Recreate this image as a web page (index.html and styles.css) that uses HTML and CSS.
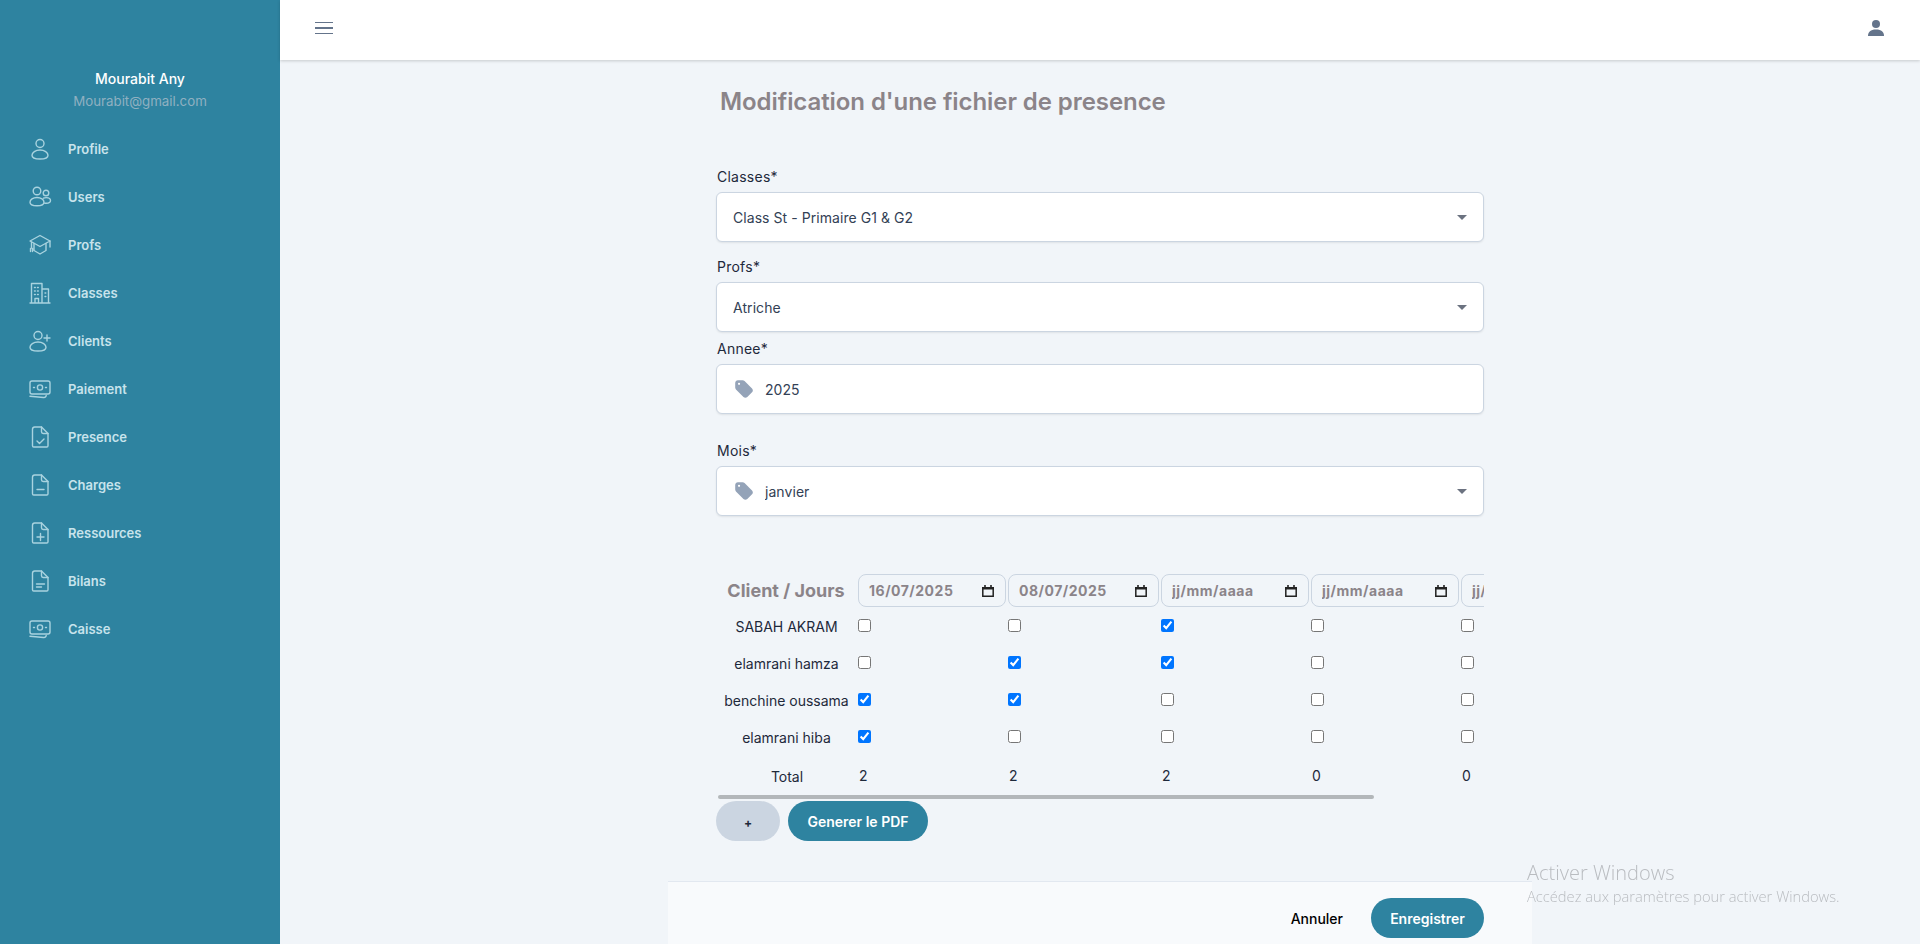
FILE: index.html

```html
<!DOCTYPE html>
<html lang="fr">
<head>
    <meta charset="UTF-8">
    <meta name="viewport" content="width=device-width, initial-scale=1.0">
    <title>Modification fichier de presence</title>
    <link rel="stylesheet" href="styles.css">
</head>
<body>
    <svg class="sprites" width="0" height="0">
        <symbol id="i-money" viewBox="0 0 24 24">
            <rect x="2" y="4" width="20" height="13" rx="2"/>
            <circle cx="12" cy="10.500" r="2.600"/>
            <path d="M5.500 10.500h1M17.500 10.500h1M2 19.200l13.500 1.300c1.400.1 2.500-.5 2.700-2"/>
        </symbol>
        <symbol id="i-doc" viewBox="0 0 24 24">
            <path d="M4.500 4.200C4.500 3 5.500 2 6.700 2h6.800L20 8.500v12.300c0 .7-.5 1.200-1.200 1.200H5.700c-.7 0-1.200-.5-1.200-1.200z"/>
            <path d="M13.500 2v4.800c0 1 .7 1.700 1.700 1.700H20"/>
        </symbol>
        <symbol id="i-tag" viewBox="0 0 20 20">
            <path d="M2 4.500C2 3.100 3.100 2 4.500 2h4.200c.7 0 1.300.3 1.800.7l6.800 6.800c1 1 1 2.500 0 3.500l-4.300 4.300c-1 1-2.500 1-3.500 0L2.700 10.500C2.300 10 2 9.400 2 8.700zM5.500 6.300a1 1 0 1 0 0-2 1 1 0 0 0 0 2z" fill-rule="evenodd"/>
        </symbol>
        <symbol id="i-cal" viewBox="0 0 12 12">
            <path d="M.8 2.800h10.400v8.400H.8z" fill="none" stroke="#222" stroke-width="1.500"/>
            <path d="M0 2h12v2.500H0zM2.200 0h1.600v2H2.200zM8.200 0h1.600v2H8.200z" fill="#222"/>
        </symbol>
    </svg>

    <div class="app">
        <aside class="sidebar">
            <div class="user-box">
                <div class="user-name">Mourabit Any</div>
                <div class="user-mail">Mourabit@gmail.com</div>
            </div>
            <nav class="menu">
                <a class="menu-item" href="#">
                    <svg class="menu-icon" viewBox="0 0 24 24"><circle cx="12" cy="6.500" r="4"/><path d="M12 13c-4.500 0-8 2.400-8 5.200 0 2.400 3.500 3.800 8 3.800s8-1.400 8-3.800C20 15.400 16.500 13 12 13z"/></svg>
                    Profile
                </a>
                <a class="menu-item" href="#">
                    <svg class="menu-icon" viewBox="0 0 24 24"><circle cx="9" cy="6" r="3.800"/><circle cx="18" cy="8" r="2.800"/><path d="M9 12.500c-4 0-7 2.200-7 4.800 0 2.200 3 3.500 7 3.500s7-1.300 7-3.500c0-2.600-3-4.800-7-4.800z"/><path d="M15.500 13.200c.8-.4 1.700-.6 2.700-.6 2.400 0 4.300 1.300 4.300 3s-1.900 2.700-4.300 2.700c-.7 0-1.300-.1-1.800-.2"/></svg>
                    Users
                </a>
                <a class="menu-item" href="#">
                    <svg class="menu-icon" viewBox="0 0 24 24"><path d="M12 2.500L2 8l10 5.500L22 8z"/><path d="M6 10.500v7l6 3.500 6-3.500v-7M22 8v6M3.500 9v6M2.500 15.500v3M4.500 15.500v3"/></svg>
                    Profs
                </a>
                <a class="menu-item" href="#">
                    <svg class="menu-icon" viewBox="0 0 24 24"><path d="M2 22h20M3.500 22V2.500h10.500V22M14 8h6.500v14M7 22v-4.500h3.500V22"/><path d="M6.500 6.500h.8M9.500 6.500h.8M6.500 10h.8M9.500 10h.8M6.500 13.500h.8M9.500 13.500h.8M17 12h.8M17 15.500h.8"/></svg>
                    Classes
                </a>
                <a class="menu-item" href="#">
                    <svg class="menu-icon" viewBox="0 0 24 24"><circle cx="10" cy="6.500" r="4"/><path d="M10 13c-4.500 0-8 2.400-8 5.200 0 2.400 3.500 3.800 8 3.800s8-1.400 8-3.800C18 15.400 14.500 13 10 13z"/><path d="M19 6v6M16 9h6"/></svg>
                    Clients
                </a>
                <a class="menu-item" href="#">
                    <svg class="menu-icon"><use href="#i-money"/></svg>
                    Paiement
                </a>
                <a class="menu-item" href="#">
                    <svg class="menu-icon"><use href="#i-doc"/><path d="M9 16l2.500 2.500 4.500-4.500"/></svg>
                    Presence
                </a>
                <a class="menu-item" href="#">
                    <svg class="menu-icon"><use href="#i-doc"/><path d="M9 16.500h7"/></svg>
                    Charges
                </a>
                <a class="menu-item" href="#">
                    <svg class="menu-icon"><use href="#i-doc"/><path d="M9 16h7M12.500 12.500v7"/></svg>
                    Ressources
                </a>
                <a class="menu-item" href="#">
                    <svg class="menu-icon"><use href="#i-doc"/><path d="M8.500 15h8M8.500 18h5"/></svg>
                    Bilans
                </a>
                <a class="menu-item" href="#">
                    <svg class="menu-icon"><use href="#i-money"/></svg>
                    Caisse
                </a>
            </nav>
        </aside>

        <div class="main">
            <header class="topbar">
                <div class="burger"><span></span><span></span><span></span></div>
                <svg class="top-user" viewBox="0 0 16 16"><circle cx="8" cy="4" r="4"/><path d="M0 16c0-4 2.500-6.500 8-6.500s8 2.500 8 6.500z"/></svg>
            </header>

            <main class="content">
                <h1 class="title">Modification d'une fichier de presence</h1>

                <form class="form">
                    <div class="group group-classes">
                        <label for="classe">Classes*</label>
                        <div class="field">
                            <select id="classe"><option>Class St - Primaire G1 &amp; G2</option></select>
                            <span class="caret"></span>
                        </div>
                    </div>
                    <div class="group group-profs">
                        <label for="prof">Profs*</label>
                        <div class="field">
                            <select id="prof"><option>Atriche</option></select>
                            <span class="caret"></span>
                        </div>
                    </div>
                    <div class="group group-annee">
                        <label for="annee">Annee*</label>
                        <div class="field">
                            <svg class="tag"><use href="#i-tag"/></svg>
                            <input id="annee" type="text" value="2025">
                        </div>
                    </div>
                    <div class="group group-mois">
                        <label for="mois">Mois*</label>
                        <div class="field">
                            <svg class="tag"><use href="#i-tag"/></svg>
                            <select id="mois"><option>janvier</option></select>
                            <span class="caret"></span>
                        </div>
                    </div>

                    <div class="table-scroll">
                        <table class="presence">
                            <thead>
                                <tr>
                                    <th class="name-col">Client / Jours</th>
                                    <th class="day"><div class="date"><input type="text" value="16/07/2025"><svg class="cal"><use href="#i-cal"/></svg></div></th>
                                    <th class="day wide"><div class="date"><input type="text" value="08/07/2025"><svg class="cal"><use href="#i-cal"/></svg></div></th>
                                    <th class="day"><div class="date"><input type="text" value="jj/mm/aaaa"><svg class="cal"><use href="#i-cal"/></svg></div></th>
                                    <th class="day"><div class="date"><input type="text" value="jj/mm/aaaa"><svg class="cal"><use href="#i-cal"/></svg></div></th>
                                    <th class="day"><div class="date"><input type="text" value="jj/mm/aaaa"><svg class="cal"><use href="#i-cal"/></svg></div></th>
                                </tr>
                            </thead>
                            <tbody>
                                <tr>
                                    <td class="name-col">SABAH AKRAM</td>
                                    <td><input type="checkbox"></td>
                                    <td><input type="checkbox"></td>
                                    <td><input type="checkbox" checked></td>
                                    <td><input type="checkbox"></td>
                                    <td><input type="checkbox"></td>
                                </tr>
                                <tr>
                                    <td class="name-col">elamrani hamza</td>
                                    <td><input type="checkbox"></td>
                                    <td><input type="checkbox" checked></td>
                                    <td><input type="checkbox" checked></td>
                                    <td><input type="checkbox"></td>
                                    <td><input type="checkbox"></td>
                                </tr>
                                <tr>
                                    <td class="name-col">benchine oussama</td>
                                    <td><input type="checkbox" checked></td>
                                    <td><input type="checkbox" checked></td>
                                    <td><input type="checkbox"></td>
                                    <td><input type="checkbox"></td>
                                    <td><input type="checkbox"></td>
                                </tr>
                                <tr>
                                    <td class="name-col">elamrani hiba</td>
                                    <td><input type="checkbox" checked></td>
                                    <td><input type="checkbox"></td>
                                    <td><input type="checkbox"></td>
                                    <td><input type="checkbox"></td>
                                    <td><input type="checkbox"></td>
                                </tr>
                                <tr class="total">
                                    <td class="name-col">Total</td>
                                    <td>2</td>
                                    <td>2</td>
                                    <td>2</td>
                                    <td>0</td>
                                    <td>0</td>
                                </tr>
                            </tbody>
                        </table>
                    </div>
                    <div class="scroll-thumb"></div>

                    <div class="table-actions">
                        <button type="button" class="btn btn-add">+</button>
                        <button type="button" class="btn btn-main btn-pdf">Generer le PDF</button>
                    </div>
                </form>

                <footer class="footer">
                    <button type="button" class="btn-cancel">Annuler</button>
                    <button type="button" class="btn btn-main btn-save">Enregistrer</button>
                </footer>
            </main>
        </div>
    </div>

    <div class="watermark">
        <div class="wm-title">Activer Windows</div>
        <div class="wm-text">Accédez aux paramètres pour activer Windows.</div>
    </div>
</body>
</html>
```

FILE: styles.css

```css
* {
    box-sizing: border-box;
}
html, body {
    height: 100%;
}
body {
    margin: 0;
    font-family: Inter, "Noto Sans", sans-serif;
    font-size: 14px;
    color: #1e293b;
    background-color: #f1f5f9;
    overflow: hidden;
}
.sprites {
    position: absolute;
}
.app {
    display: flex;
    height: 944px;
}

/* sidebar */
.sidebar {
    width: 280px;
    flex-shrink: 0;
    background-color: #2e83a0;
    padding-top: 68px;
}
.user-box {
    text-align: center;
}
.user-name {
    color: #fff;
    font-size: 14px;
    font-weight: 500;
    line-height: 22px;
}
.user-mail {
    color: #8fb0c0;
    font-size: 13.3px;
    line-height: 20px;
    padding-top: 1px;
}
.menu {
    margin-top: 14px;
}
.menu-item {
    display: flex;
    align-items: center;
    height: 48px;
    padding-left: 28px;
    gap: 16px;
    color: #c8e3ec;
    font-size: 13px;
    font-weight: 600;
    text-decoration: none;
}
.menu-icon {
    width: 24px;
    height: 24px;
    fill: none;
    stroke: #a9d3df;
    stroke-width: 1.400;
    stroke-linecap: round;
    stroke-linejoin: round;
}

/* top bar */
.main {
    flex: 1;
    display: flex;
    flex-direction: column;
    min-width: 0;
}
.topbar {
    height: 60px;
    flex-shrink: 0;
    background-color: #fff;
    box-shadow: 0 1px 3px rgba(0,0,0,0.18);
    display: flex;
    align-items: center;
    justify-content: space-between;
    padding: 0 36px 4px 35px;
    position: relative;
}
.burger {
    width: 18px;
    display: flex;
    flex-direction: column;
    gap: 4px;
}
.burger span {
    height: 1.500px;
    background-color: #64748b;
}
.top-user {
    width: 16px;
    height: 16px;
    fill: #64748b;
}

/* content */
.content {
    flex: 1;
    display: flex;
    flex-direction: column;
    align-items: center;
    min-height: 0;
}
.title {
    width: 768px;
    margin: 26px 0 0;
    padding-left: 4px;
    font-size: 24px;
    line-height: 32px;
    font-weight: 600;
    letter-spacing: -0.07px;
    color: #8b8489;
}
.form {
    width: 768px;
}
.group label {
    display: block;
    font-size: 14px;
    line-height: 20px;
    margin-bottom: 5px;
    padding-left: 1px;
    letter-spacing: 0.25px;
    color: #1e293b;
}
.group-classes { margin-top: 49px; }
.group-profs { margin-top: 15px; }
.group-annee { margin-top: 7px; }
.group-mois { margin-top: 27px; }

.field {
    display: flex;
    align-items: center;
    height: 50px;
    padding: 0 16px;
    gap: 10px;
    background-color: #fff;
    border: 1px solid #cbd5e1;
    border-radius: 6px;
    box-shadow: 0 1px 2px rgba(0,0,0,0.08);
}
.field select, .field input {
    flex: 1;
    min-width: 0;
    border: none;
    outline: none;
    background: transparent;
    appearance: none;
    padding: 0;
    font-family: inherit;
    font-size: 14px;
    letter-spacing: 0.06px;
    color: #334155;
}
.caret {
    width: 0;
    height: 0;
    border-left: 5px solid transparent;
    border-right: 5px solid transparent;
    border-top: 5px solid #6b7280;
}
.tag {
    width: 22px;
    height: 22px;
    fill: #94a3b8;
    flex-shrink: 0;
}

/* table */
.table-scroll {
    margin-top: 58px;
    width: 768px;
    overflow: hidden;
}
.scroll-thumb {
    width: 656px;
    height: 4px;
    margin-left: 2px;
    background-color: #b3b7ba;
    border-radius: 2px;
}
.presence {
    border-collapse: collapse;
    table-layout: fixed;
    width: 895px;
}
.presence th, .presence td {
    padding: 0;
    text-align: left;
}
.presence .name-col {
    width: 142px;
    text-align: center;
    padding-right: 1px;
}
.presence th.name-col {
    font-size: 18px;
    font-weight: 700;
    padding-right: 2px;
    color: #8b8489;
}
.presence tbody .name-col {
    padding-top: 2px;
}
.presence .day {
    width: 150px;
}
.presence .wide {
    width: 153px;
}
.date {
    display: flex;
    align-items: center;
    height: 33px;
    padding: 0 11px 0 10px;
    margin-right: 2px;
    border: 1px solid #cbd5e1;
    border-radius: 8px;
}
.date input {
    flex: 1;
    min-width: 0;
    border: none;
    outline: none;
    background: transparent;
    padding: 0;
    font-family: inherit;
    font-size: 14px;
    font-weight: 700;
    letter-spacing: 0.5px;
    color: #8b8489;
}
.cal {
    width: 12px;
    height: 12px;
    flex-shrink: 0;
}
.presence tbody tr {
    height: 37px;
}
.presence tbody .total {
    height: 40px;
}
.presence td input[type="checkbox"] {
    display: block;
    margin: 0;
}
.total td {
    padding-left: 1px;
}

/* boutons */
.table-actions {
    display: flex;
    gap: 8px;
    margin-top: 2px;
}
.btn {
    height: 40px;
    border: none;
    border-radius: 20px;
    font-family: inherit;
    font-size: 14px;
    font-weight: 600;
    cursor: pointer;
}
.btn-add {
    width: 64px;
    background-color: #cbd5e1;
    color: #1e293b;
    font-size: 12px;
    font-weight: 700;
    padding-top: 3px;
}
.btn-main {
    background-color: #2e83a0;
    color: #fff;
}
.btn-pdf {
    width: 140px;
}
.btn-save {
    width: 113px;
}
.btn-cancel {
    border: none;
    background: none;
    font-family: inherit;
    font-size: 14px;
    font-weight: 500;
    color: #000;
    padding: 0;
    margin-right: 28px;
    height: 40px;
}

.footer {
    width: 864px;
    height: 63px;
    margin-top: auto;
    display: flex;
    justify-content: flex-end;
    align-items: flex-start;
    padding: 16px 48px 0 0;
    background-color: #f8fafc;
    border-top: 1px solid #e2e8f0;
}

.watermark {
    position: fixed;
    left: 1527px;
    top: 860px;
    color: #b9bcc0;
    font-family: "Open Sans", sans-serif;
    font-weight: 300;
}
.wm-title {
    font-size: 20px;
    line-height: 26px;
}
.wm-text {
    font-size: 14.700px;
    line-height: 20px;
}
```
